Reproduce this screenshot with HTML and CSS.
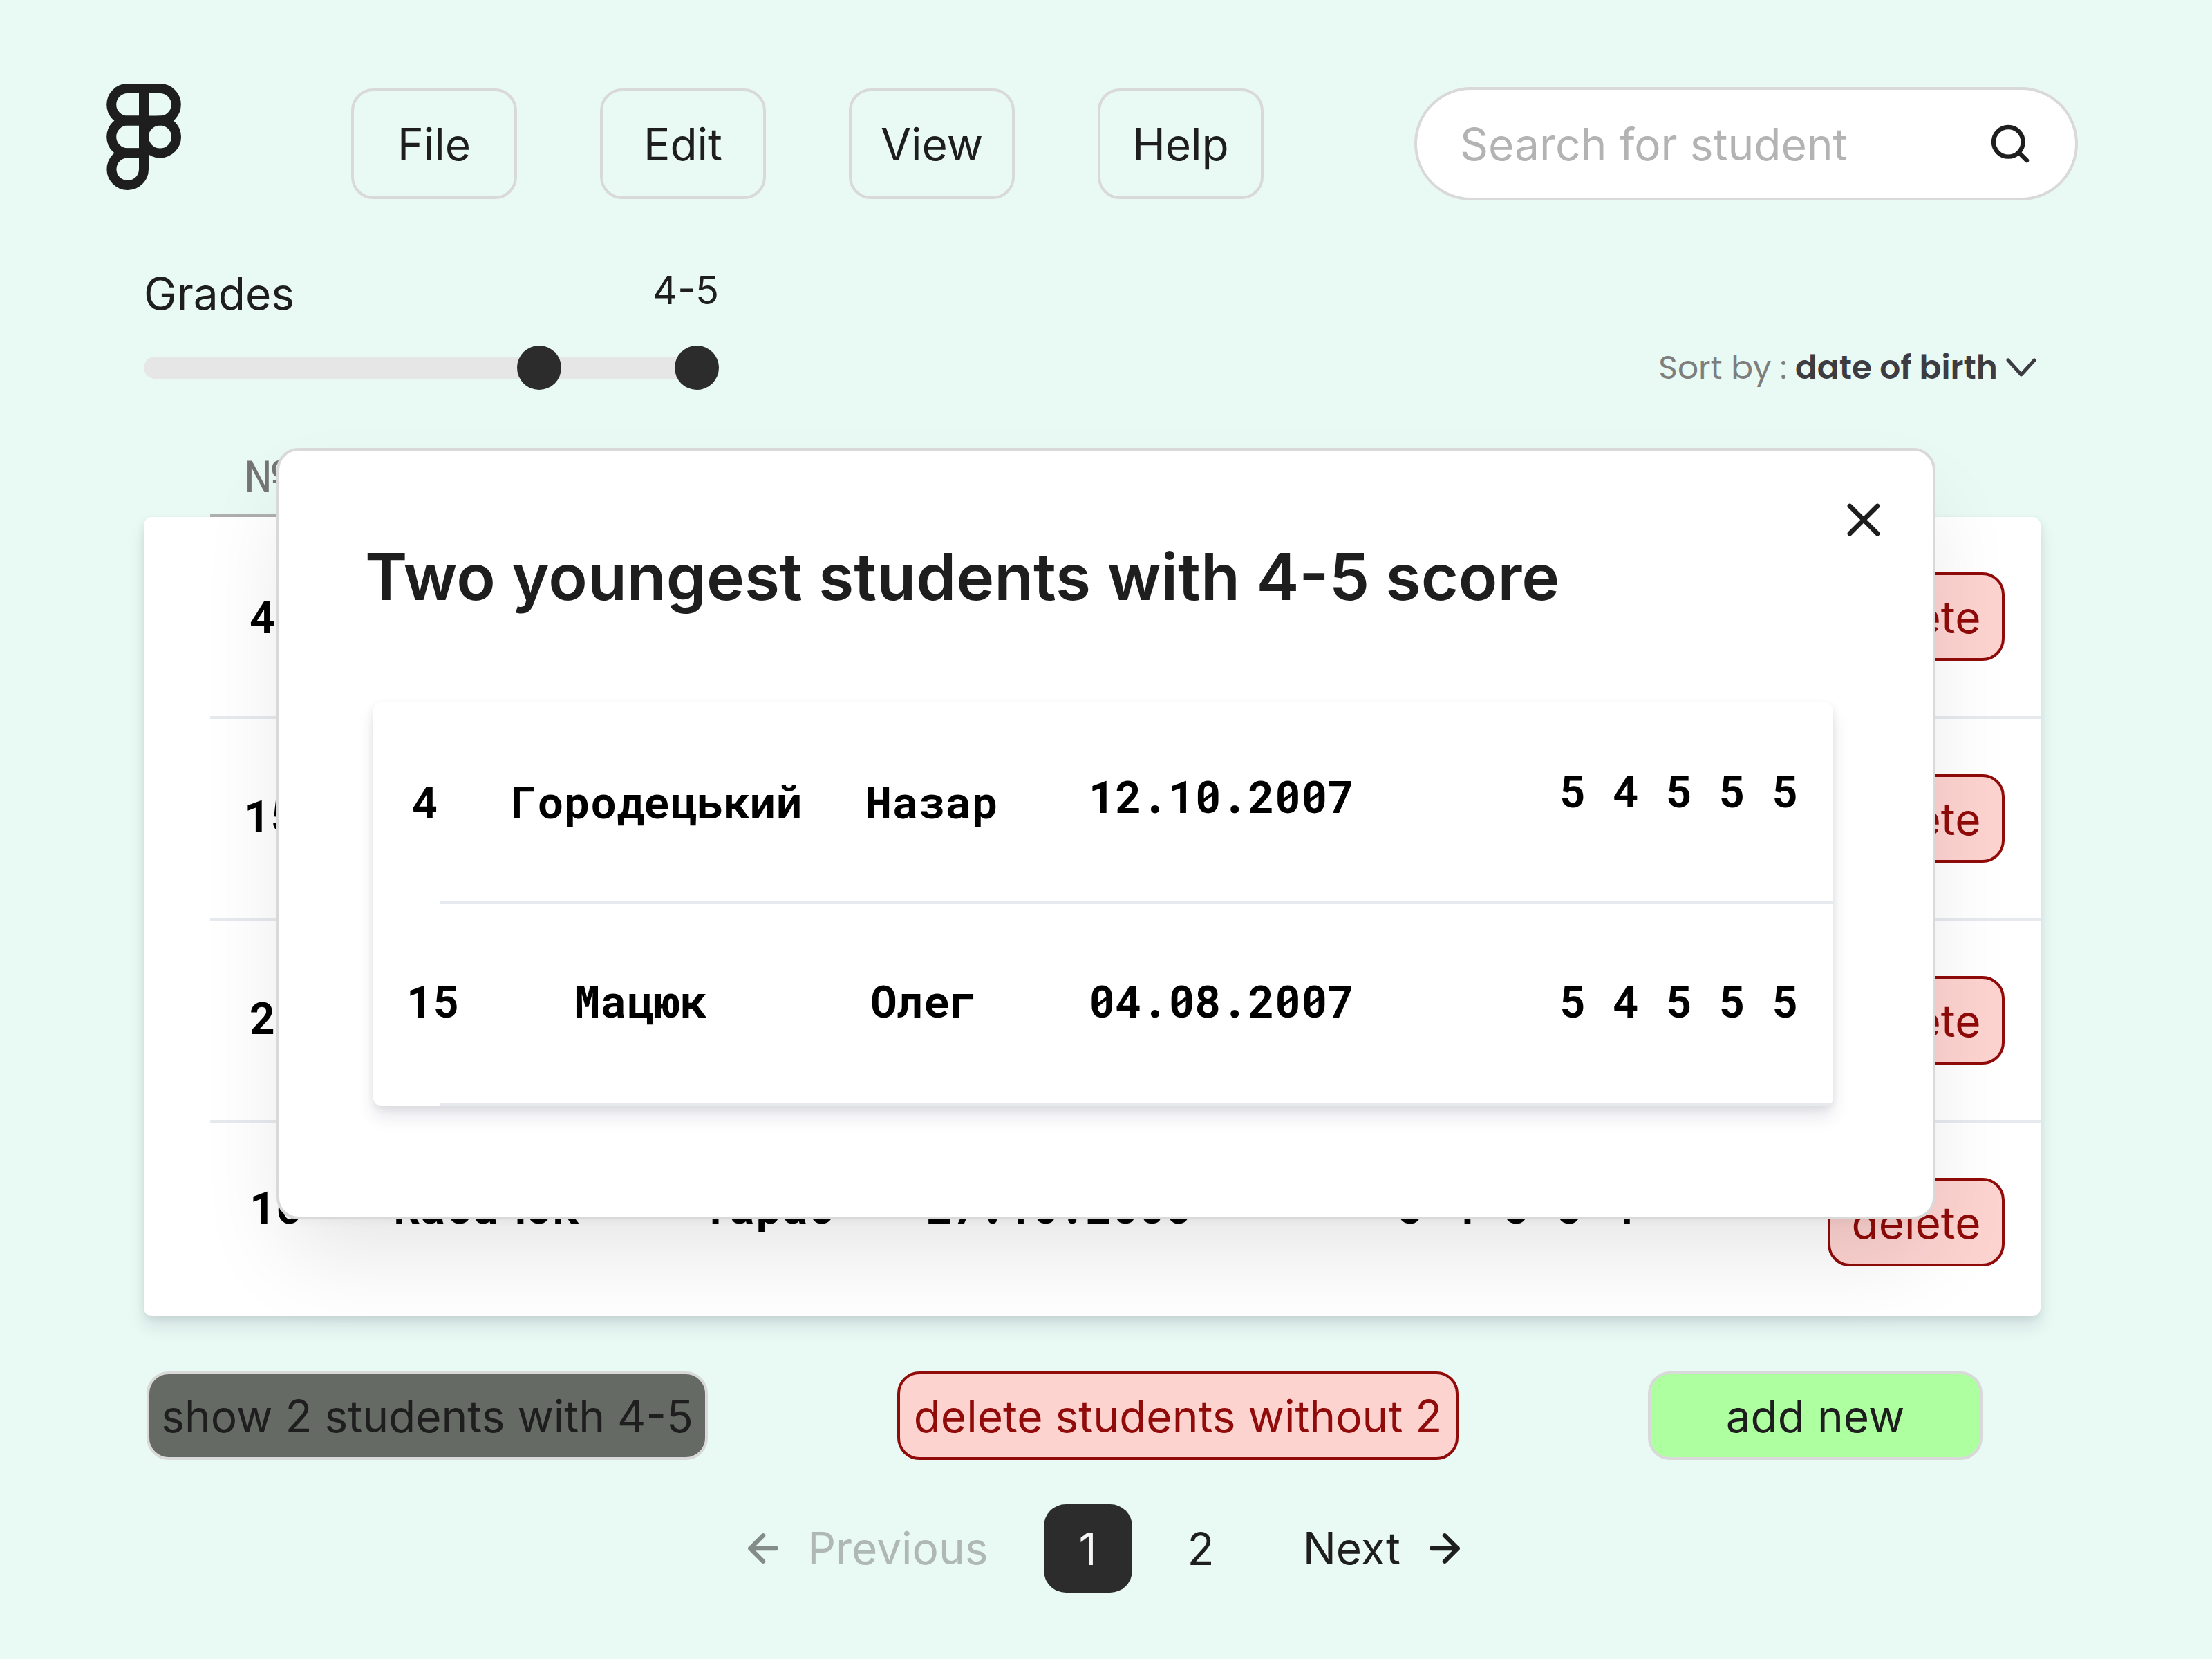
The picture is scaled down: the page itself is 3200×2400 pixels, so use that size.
FILE: index.html
```html
<!DOCTYPE html>
<html lang="en">
<head>
<meta charset="utf-8">
<title>Student grades</title>
<link rel="stylesheet" href="styles.css">
</head>
<body>
<header class="topbar">
  <a class="logo" href="#" aria-label="Home">
    <svg width="108" height="154" viewBox="0 0 108 154" fill="none" stroke="currentColor" stroke-width="14" stroke-linejoin="round">
      <path d="M54 7H30.500a23.300 23.300 0 0 0 0 46.600H54z"/>
      <path d="M54 7H77.500a23.300 23.300 0 0 1 0 46.600H54z"/>
      <path d="M54 53.600H30.500a23.300 23.300 0 0 0 0 46.600H54z"/>
      <circle cx="77.500" cy="77" r="23.500"/>
      <path d="M54 100.400H30.500a23.300 23.300 0 1 0 23.500 23.300z"/>
    </svg>
  </a>
  <div class="toolbar">
    <nav class="menu">
      <button class="menu-item" type="button">File</button>
      <button class="menu-item" type="button">Edit</button>
      <button class="menu-item" type="button">View</button>
      <button class="menu-item" type="button">Help</button>
    </nav>
    <form class="search">
      <input class="search-input" type="text" placeholder="Search for student" aria-label="Search for student">
      <button class="icon-button" type="button" aria-label="Search">
        <svg width="64" height="64" viewBox="0 0 16 16" fill="none" stroke="currentColor" stroke-width="1.600" stroke-linecap="round"><circle cx="7.330" cy="7.330" r="5.330"/><path d="M14 14l-2.900-2.900"/></svg>
      </button>
    </form>
  </div>
</header>

<main class="content">
  <div class="filters">
    <div class="grades">
      <div class="grades-head">
        <label for="grade-from">Grades</label>
        <output class="grades-value" for="grade-from grade-to">4-5</output>
      </div>
      <div class="range">
        <input id="grade-from" type="range" min="1" max="5" step="any" value="3.8125">
        <input id="grade-to" type="range" min="1" max="5" step="any" value="5" aria-label="Highest grade">
      </div>
    </div>
    <div class="sort">
      <label for="sort">Sort by :</label>
      <select id="sort" class="sort-select"><option>date of birth</option></select>
      <svg class="sort-arrow" width="44" height="28" viewBox="0 0 44 28" fill="none" stroke="currentColor" stroke-width="5" stroke-linecap="round" stroke-linejoin="round"><path d="M3 3l19 21L41 3"/></svg>
    </div>
  </div>

  <table class="roster">
    <thead><tr><th scope="col">№</th></tr></thead>
    <tbody>
      <tr class="row"><td class="indent">4</td><td></td><td></td><td></td><td></td><td class="action"><button class="button danger" type="button">delete</button></td></tr>
      <tr class="row"><td class="lift-1">15</td><td></td><td></td><td></td><td></td><td class="action"><button class="button danger" type="button">delete</button></td></tr>
      <tr class="row"><td class="indent lift-1">2</td><td></td><td></td><td></td><td></td><td class="action"><button class="button danger" type="button">delete</button></td></tr>
      <tr class="row last"><td class="indent">16</td><td>Кабачок</td><td>Тарас</td><td>27.10.2006</td><td>5 4 5 5 4</td><td class="action"><button class="button danger" type="button">delete</button></td></tr>
    </tbody>
  </table>

  <div class="actions">
    <button class="button wide pressed" type="button">show 2 students with 4-5</button>
    <button class="button wide danger" type="button">delete students without 2</button>
    <button class="button add" type="button">add new</button>
  </div>

  <nav class="pagination" aria-label="Pages">
    <button class="page-step" type="button" disabled>
      <svg width="64" height="64" viewBox="0 0 16 16" fill="none" stroke="currentColor" stroke-width="1.600" stroke-linecap="round" stroke-linejoin="round"><path d="M12.670 8H3.330M8 12.670L3.330 8 8 3.330"/></svg>
      <span>Previous</span>
    </button>
    <a class="page current" href="#" aria-current="page">1</a>
    <a class="page" href="#">2</a>
    <button class="page-step" type="button">
      <span>Next</span>
      <svg width="64" height="64" viewBox="0 0 16 16" fill="none" stroke="currentColor" stroke-width="1.600" stroke-linecap="round" stroke-linejoin="round"><path d="M3.330 8h9.340M8 3.330L12.670 8 8 12.670"/></svg>
    </button>
  </nav>
</main>

<section class="dialog" role="dialog" aria-labelledby="dialog-title">
  <button class="icon-button close" type="button" aria-label="Close">
    <svg width="80" height="80" viewBox="0 0 20 20" fill="none" stroke="currentColor" stroke-width="1.700" stroke-linecap="round"><path d="M5 5l10 10M15 5L5 15"/></svg>
  </button>
  <h1 class="dialog-title" id="dialog-title">Two youngest students with 4-5 score</h1>
  <table class="result">
    <tbody>
      <tr class="row"><td class="indent">4</td><td>Городецький</td><td>Назар</td><td class="lift-2">12.10.2007</td><td class="lift-3">5 4 5 5 5</td></tr>
      <tr class="row"><td class="lift-1">15</td><td class="lift-1 pull-2">Мацюк</td><td class="lift-1 pull-1">Олег</td><td class="lift-1">04.08.2007</td><td class="lift-1">5 4 5 5 5</td></tr>
    </tbody>
  </table>
</section>
</body>
</html>
```
FILE: styles.css
```css
* { box-sizing: border-box; }

body {
  position: relative;
  margin: 0;
  min-height: 100vh;
  background: #e9faf4;
  color: #1e1e1e;
  font: 400 64px/90px Inter, sans-serif;
}

button, input, select { font: inherit; color: inherit; }
button { cursor: pointer; }
svg { display: block; }
a { color: inherit; text-decoration: none; }

/* Top bar */
.topbar { display: flex; align-items: flex-start; padding: 121px 194px 0 154px; }
.logo { flex: none; }
.toolbar {
  flex: 1;
  display: flex;
  align-items: center;
  justify-content: space-between;
  margin-left: 246px;
  padding-top: 5px;
}
.menu { display: flex; gap: 120px; }
.menu-item {
  width: 240px;
  height: 160px;
  padding: 2px 0 0;
  border: 4px solid #d9d9d9;
  border-radius: 32px;
  background: none;
}
.search {
  display: flex;
  align-items: center;
  width: 960px;
  height: 164px;
  padding: 0 62px;
  border: 4px solid #d9d9d9;
  border-radius: 82px;
  background: #fff;
}
.search-input {
  flex: 1;
  min-width: 0;
  padding: 2px 0 0;
  border: 0;
  outline: 0;
  background: none;
}
.search-input::placeholder { color: #b3b3b3; opacity: 1; }
.icon-button { padding: 0; border: 0; background: none; }

.content { padding: 90px 248px 0 208px; }

/* Filters */
.filters { display: flex; justify-content: space-between; align-items: flex-end; }
.grades { width: 832px; }
.grades-head { display: flex; justify-content: space-between; align-items: flex-start; }
.grades-value { font-size: 56px; line-height: 80px; }
.range { display: grid; margin-top: 30px; }
.range input {
  grid-area: 1 / 1;
  width: 100%;
  height: 64px;
  margin: 0;
  appearance: none;
  background: none;
  pointer-events: none;
}
.range input::-webkit-slider-runnable-track { height: 64px; }
.range input:first-child {
  background: linear-gradient(#e6e6e6, #e6e6e6) 16px 16px / 800px 32px no-repeat,
    radial-gradient(circle closest-side, #e6e6e6 98%, transparent) 0 16px / 32px 32px no-repeat;
}
.range input::-webkit-slider-thumb {
  width: 64px;
  height: 64px;
  border-radius: 50%;
  appearance: none;
  background: #2c2c2c;
  pointer-events: auto;
}
.sort {
  display: flex;
  align-items: center;
  gap: 12px;
  padding-right: 6px;
  color: #7e7e7e;
  font-family: Poppins, Inter, sans-serif;
  font-size: 47px;
  line-height: 64px;
}
.sort-select {
  padding: 0;
  border: 0;
  appearance: none;
  background: none;
  color: #3d3c42;
  font-weight: 600;
}
.sort-arrow { color: #3d3c42; }

/* Student tables */
.roster, .roster thead, .roster tbody, .result, .result tbody { display: block; }
.roster thead { padding-top: 82px; }
.roster thead tr {
  display: block;
  height: 102px;
  margin-right: 256px;
  padding-left: 145px;
  background: linear-gradient(#b2b2b2, #b2b2b2) 96px 100% / 100% 4px no-repeat;
}
.roster th {
  display: block;
  padding: 0;
  color: #757575;
  font-family: Roboto, sans-serif;
  font-weight: 400;
  text-align: left;
}
.roster tbody, .result {
  overflow: hidden;
  border-radius: 12px;
  background: #fff;
  box-shadow: 0 16px 24px rgba(50, 50, 93, .11), 0 4px 12px rgba(0, 0, 0, .08);
}
.row {
  display: grid;
  align-items: center;
  min-height: 292px;
  background: linear-gradient(#e6eaee, #e6eaee) 96px 100% / 100% 4px no-repeat;
  color: #000;
  font-family: "Roboto Mono", "DejaVu Sans Mono", monospace;
  font-weight: 700;
}
.row td { padding: 0 0 6px; text-align: center; white-space: nowrap; }
.row td:first-child { text-align: left; }
.roster .row {
  grid-template-columns: 150fr 400fr 418fr 422fr 901fr 256px;
  padding: 0 52px 0 145px;
}
.roster .action {
  align-self: start;
  padding: 80px 0 0;
  font-family: Inter, sans-serif;
  font-weight: 400;
}
.roster .last { min-height: 280px; background: none; }
.row .indent { padding-left: 8px; }
.row .lift-1 { padding-bottom: 14px; }
.row .lift-2 { padding-bottom: 22px; }
.row .lift-3, .roster .last td:not(.action) { padding-bottom: 38px; }
.row .pull-1 { padding-right: 24px; }
.row .pull-2 { padding-right: 48px; }

/* Buttons */
.button {
  height: 128px;
  padding: 2px 0 0;
  border: 4px solid #d9d9d9;
  border-radius: 32px;
  white-space: nowrap;
}
.danger { border-color: #900b09; background: #fdd3d0; color: #900b09; }
.pressed { background: #656a64; }
.wide { width: 812px; }
.add { width: 484px; background: #aeffa0; }
.action .button { display: block; width: 100%; }
.actions {
  display: flex;
  justify-content: space-between;
  padding: 80px 84px 0 4px;
}

/* Pagination */
.pagination {
  display: flex;
  justify-content: center;
  gap: 32px;
  margin-top: 64px;
  margin-right: -34px;
}
.page, .page-step { height: 128px; padding: 0 48px; border-radius: 32px; line-height: 130px; }
.page { min-width: 128px; text-align: center; }
.page-step { display: flex; align-items: center; gap: 32px; border: 0; background: none; }
.page-step:disabled { color: #838c89; }
.page-step:disabled span { color: #b0b8b5; }
.current { background: #2c2c2c; color: #f5f5f5; }

/* Dialog */
.dialog {
  position: absolute;
  top: 648px;
  right: 400px;
  left: 400px;
  padding: 124px 144px 160px 136px;
  border: 4px solid #d9d9d9;
  border-radius: 32px;
  background: #fff;
  box-shadow: 0 16px 16px -16px rgba(12, 12, 13, .05), 0 64px 128px -16px rgba(12, 12, 13, .1);
}
.close { position: absolute; top: 60px; right: 60px; }
.dialog-title {
  margin: 0 0 124px -12px;
  font-size: 93px;
  font-weight: 600;
  line-height: 116px;
}
.result .row {
  grid-template-columns: 140fr 444fr 352fr 486fr 592fr;
  padding: 0 50px 0 48px;
}
.result .row td:last-child { text-align: right; }
```
